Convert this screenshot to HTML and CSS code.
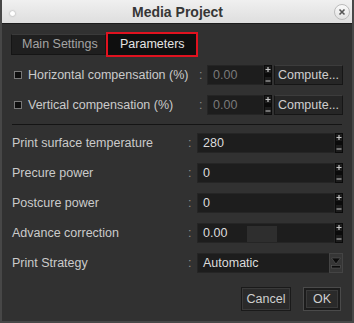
FILE: index.html
```html
<!DOCTYPE html>
<html lang="en">
<head>
    <meta charset="UTF-8">
    <title>Media Project</title>
    <link rel="stylesheet" href="styles.css">
</head>
<body>

<div class="window">
    <div class="titlebar">
        <span class="dot"></span>
        <span class="title">Media Project</span>
        <span class="close">
            <svg width="14" height="14" viewBox="0 0 14 14">
                <path d="M4.5 4.5l5 5M9.5 4.5l-5 5" stroke="#555" stroke-width="1.6"/>
            </svg>
        </span>
    </div>

    <div class="content">
        <div class="tabs">
            <div class="tab">Main Settings</div>
            <div class="tab active">Parameters</div>
        </div>

        <div class="row comp">
            <span class="check"></span>
            <span class="label">Horizontal compensation (%)</span>
            <span class="colon">:</span>
            <span class="field short disabled">0.00</span>
            <svg class="spin" width="8" height="20" viewBox="0 0 8 20">
                <rect width="8" height="20" fill="#0b0b0b"/>
                <rect x="1" y="1" width="6" height="7" fill="#1c1c1c"/>
                <rect x="1" y="12" width="6" height="7" fill="#1c1c1c"/>
                <path d="M4 2v5M1.5 4.5h5M1.5 16h5" stroke="#c4c4c4" stroke-width="1.2"/>
            </svg>
            <button class="btn compute">Compute...</button>
        </div>

        <div class="row comp">
            <span class="check"></span>
            <span class="label">Vertical compensation (%)</span>
            <span class="colon">:</span>
            <span class="field short disabled">0.00</span>
            <svg class="spin" width="8" height="20" viewBox="0 0 8 20">
                <rect width="8" height="20" fill="#0b0b0b"/>
                <rect x="1" y="1" width="6" height="7" fill="#1c1c1c"/>
                <rect x="1" y="12" width="6" height="7" fill="#1c1c1c"/>
                <path d="M4 2v5M1.5 4.5h5M1.5 16h5" stroke="#c4c4c4" stroke-width="1.2"/>
            </svg>
            <button class="btn compute">Compute...</button>
        </div>

        <div class="separator"></div>

        <div class="row param">
            <span class="label">Print surface temperature</span>
            <span class="colon">:</span>
            <span class="field long">280</span>
            <svg class="spin" width="8" height="20" viewBox="0 0 8 20">
                <rect width="8" height="20" fill="#0b0b0b"/>
                <rect x="1" y="1" width="6" height="7" fill="#1c1c1c"/>
                <rect x="1" y="12" width="6" height="7" fill="#1c1c1c"/>
                <path d="M4 2v5M1.5 4.5h5M1.5 16h5" stroke="#c4c4c4" stroke-width="1.2"/>
            </svg>
        </div>

        <div class="row param">
            <span class="label">Precure power</span>
            <span class="colon">:</span>
            <span class="field long">0</span>
            <svg class="spin" width="8" height="20" viewBox="0 0 8 20">
                <rect width="8" height="20" fill="#0b0b0b"/>
                <rect x="1" y="1" width="6" height="7" fill="#1c1c1c"/>
                <rect x="1" y="12" width="6" height="7" fill="#1c1c1c"/>
                <path d="M4 2v5M1.5 4.5h5M1.5 16h5" stroke="#c4c4c4" stroke-width="1.2"/>
            </svg>
        </div>

        <div class="row param">
            <span class="label">Postcure power</span>
            <span class="colon">:</span>
            <span class="field long">0</span>
            <svg class="spin" width="8" height="20" viewBox="0 0 8 20">
                <rect width="8" height="20" fill="#0b0b0b"/>
                <rect x="1" y="1" width="6" height="7" fill="#1c1c1c"/>
                <rect x="1" y="12" width="6" height="7" fill="#1c1c1c"/>
                <path d="M4 2v5M1.5 4.5h5M1.5 16h5" stroke="#c4c4c4" stroke-width="1.2"/>
            </svg>
        </div>

        <div class="row param">
            <span class="label">Advance correction</span>
            <span class="colon">:</span>
            <span class="field long split"><span class="value">0.00</span><span class="ghost"></span></span>
            <svg class="spin" width="8" height="20" viewBox="0 0 8 20">
                <rect width="8" height="20" fill="#0b0b0b"/>
                <rect x="1" y="1" width="6" height="7" fill="#1c1c1c"/>
                <rect x="1" y="12" width="6" height="7" fill="#1c1c1c"/>
                <path d="M4 2v5M1.5 4.5h5M1.5 16h5" stroke="#c4c4c4" stroke-width="1.2"/>
            </svg>
        </div>

        <div class="row param">
            <span class="label">Print Strategy</span>
            <span class="colon">:</span>
            <span class="combo">
                <span class="combo-text">Automatic</span>
                <svg class="combo-arrow" width="14" height="20" viewBox="0 0 14 20">
                    <rect width="14" height="20" fill="#363636"/>
                    <rect x="0.5" y="0.5" width="13" height="19" fill="none" stroke="#444"/>
                    <path d="M2.5 5h9L7 11z" fill="#0c0c0c" stroke="#5a5a5a" stroke-width="0.6"/>
                    <rect x="2.5" y="12.5" width="9" height="2.5" fill="#0c0c0c" stroke="#5a5a5a" stroke-width="0.6"/>
                </svg>
            </span>
        </div>

        <div class="actions">
            <button class="btn action">Cancel</button>
            <button class="btn action default">OK</button>
        </div>
    </div>
</div>

</body>
</html>
```

FILE: styles.css
```css
body {
    margin: 0;
    padding: 0;
    background: #2f2f2f;
    font-family: "Liberation Sans", Arial, sans-serif;
}
.window {
    width: 354px;
    height: 323px;
    box-sizing: border-box;
    background: #313131;
    border-left: 2px solid #474747;
    border-right: 2px solid #474747;
    border-bottom: 2px solid #474747;
    overflow: hidden;
}
.titlebar {
    height: 23px;
    display: flex;
    align-items: center;
    padding: 0 4px 0 10px;
    margin: 0 -2px;
    background: linear-gradient(#f0f0f0, #dedede);
    border-bottom: 1px solid #1c1c1c;
}
.dot {
    width: 5px;
    height: 5px;
    border-radius: 50%;
    background: #fff;
    box-shadow: 0 0 2px rgba(0, 0, 0, 0.35);
    margin-top: 4px;
}
.title {
    flex: 1;
    text-align: center;
    font-size: 14px;
    font-weight: bold;
    color: #363636;
    padding-left: 6px;
}
.close {
    width: 14px;
    height: 14px;
    border-radius: 50%;
    border: 1px solid #bbb;
    background: linear-gradient(#fafafa, #e2e2e2);
    display: flex;
}
.content {
    padding: 0 9px 0 9px;
    font-size: 12.5px;
    color: #cbcbcb;
}
.tabs {
    display: flex;
    align-items: center;
    margin-top: 8px;
    height: 25px;
}
.tab {
    width: 95px;
    box-sizing: border-box;
    height: 21px;
    line-height: 19px;
    padding-left: 10px;
    background: #1f1f1f;
    border: 1px solid #151515;
    border-top-color: #3a3a3a;
    color: #a4a4a4;
    white-space: nowrap;
}
.tab.active {
    width: 92px;
    height: 25px;
    line-height: 21px;
    padding-left: 12px;
    background: #0f0f0f;
    border: 2px solid #e0121f;
    color: #e4e4e4;
}
.row {
    display: flex;
    align-items: center;
    height: 20px;
}
.comp {
    margin-top: 10px;
}
.tabs + .comp {
    margin-top: 8px;
}
.check {
    width: 6px;
    height: 6px;
    background: #0e0e0e;
    border: 1px solid #777;
    margin: 0 6px 0 3px;
}
.label {
    flex: 1;
    padding-left: 1px;
    white-space: nowrap;
}
.comp .label {
    padding-left: 0;
}
.colon {
    color: #8a8a8a;
    text-align: left;
}
.comp .colon {
    width: 8px;
}
.param .colon {
    width: 9px;
}
.field {
    height: 20px;
    box-sizing: border-box;
    line-height: 18px;
    padding-left: 5px;
    background: #1d1d1d;
    border: 1px solid #252525;
    color: #dcdcdc;
}
.field.short {
    width: 57px;
}
.field.long {
    width: 138px;
}
.field.disabled {
    color: #7a7a7a;
}
.split {
    display: flex;
    align-items: flex-end;
}
.split .value {
    width: 44px;
    align-self: center;
}
.ghost {
    width: 30px;
    height: 16px;
    background: #2e2e2e;
}
.spin {
    display: block;
    flex-shrink: 0;
}
.btn {
    font-family: "Liberation Sans", Arial, sans-serif;
    font-size: 12.5px;
    color: #cfcfcf;
    background: #262626;
    border: 1px solid #161616;
    border-top-color: #3c3c3c;
    padding: 0;
    margin: 0;
}
.compute {
    width: 69px;
    height: 20px;
    margin-left: 2px;
}
.separator {
    height: 1px;
    background: #141414;
    margin: 9px 1px 8px 1px;
}
.param + .param {
    margin-top: 10px;
}
.combo {
    width: 146px;
    height: 20px;
    box-sizing: border-box;
    display: flex;
    align-items: center;
    background: #1d1d1d;
    border: 1px solid #252525;
    border-right: none;
}
.combo-text {
    flex: 1;
    padding-left: 5px;
    color: #dcdcdc;
}
.combo-arrow {
    display: block;
}
.actions {
    display: flex;
    justify-content: flex-end;
    gap: 12px;
    margin-top: 14px;
    padding-right: 2px;
}
.action {
    width: 50px;
    height: 24px;
    background: #2a2a2a;
    border: 1px solid #1a1a1a;
    box-shadow: inset 0 0 0 1px #3a3a3a;
}
.action.default {
    width: 38px;
    border: 1px solid #4a4a4a;
    box-shadow: inset 0 0 0 2px #1c1c1c, inset 0 0 0 3px #3a3a3a;
}
```
